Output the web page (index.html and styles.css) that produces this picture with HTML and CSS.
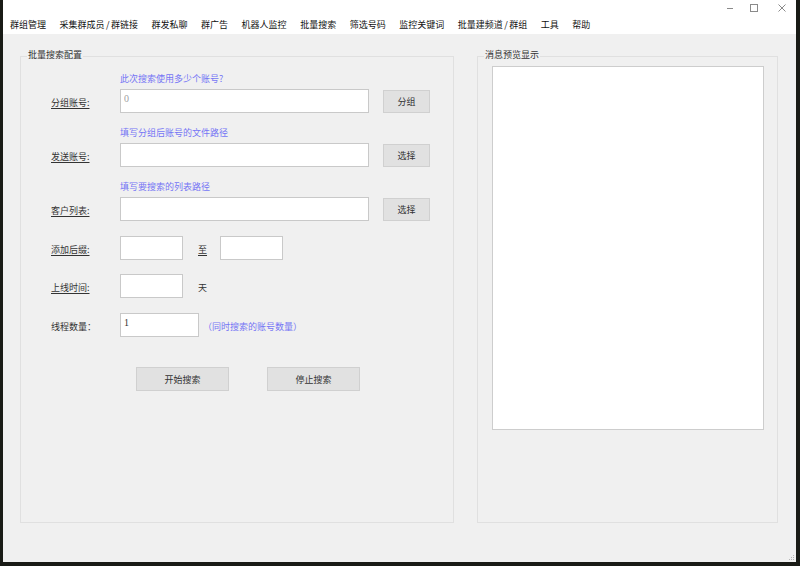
FILE: index.html
```html
<!DOCTYPE html>
<html lang="zh-CN">
<head>
  <meta charset="UTF-8">
  <title>批量搜索</title>
  <link rel="stylesheet" href="styles.css">
</head>
<body>

<div class="window">
  <div class="titlebar">
    <svg class="cap-btn" width="20" height="17" viewBox="0 0 20 17"><line x1="7" y1="8.5" x2="13" y2="8.5" stroke="#8a8a8a" stroke-width="1"/></svg>
    <svg class="cap-btn" width="28" height="17" viewBox="0 0 28 17"><rect x="10.5" y="4.5" width="7" height="7" fill="none" stroke="#8a8a8a" stroke-width="1"/></svg>
    <svg class="cap-btn" width="28" height="17" viewBox="0 0 28 17"><path d="M10.5 4.5 L17.5 11.5 M17.5 4.5 L10.5 11.5" stroke="#8a8a8a" stroke-width="1"/></svg>
  </div>

  <ul class="menubar">
    <li>群组管理</li>
    <li>采集群成员<span class="slash">/</span>群链接</li>
    <li>群发私聊</li>
    <li>群广告</li>
    <li>机器人监控</li>
    <li>批量搜索</li>
    <li>筛选号码</li>
    <li>监控关键词</li>
    <li>批量建频道<span class="slash">/</span>群组</li>
    <li>工具</li>
    <li>帮助</li>
  </ul>

  <div class="content">
    <div class="group group-config">
      <span class="group-title">批量搜索配置</span>

      <div class="field">
        <div class="hint">此次搜索使用多少个账号?</div>
        <div class="row">
          <label class="label u">分组账号:</label>
          <input class="text wide" type="text" placeholder="0">
          <button class="btn btn-small">分组</button>
        </div>
      </div>

      <div class="field field-next">
        <div class="hint">填写分组后账号的文件路径</div>
        <div class="row">
          <label class="label u">发送账号:</label>
          <input class="text wide" type="text">
          <button class="btn btn-small">选择</button>
        </div>
      </div>

      <div class="field field-next">
        <div class="hint">填写要搜索的列表路径</div>
        <div class="row">
          <label class="label u">客户列表:</label>
          <input class="text wide" type="text">
          <button class="btn btn-small">选择</button>
        </div>
      </div>

      <div class="row row-suffix">
        <label class="label u">添加后缀:</label>
        <input class="text short" type="text">
        <span class="sep u">至</span>
        <input class="text short" type="text">
      </div>

      <div class="row row-online">
        <label class="label u">上线时间:</label>
        <input class="text short" type="text">
        <span class="sep">天</span>
      </div>

      <div class="row row-thread">
        <label class="label">线程数量：</label>
        <input class="text mid" type="text" value="1">
        <span class="hint-inline">（同时搜索的账号数量）</span>
      </div>

      <div class="actions">
        <button class="btn btn-big">开始搜索</button>
        <button class="btn btn-big">停止搜索</button>
      </div>
    </div>

    <div class="group group-preview">
      <span class="group-title">消息预览显示</span>
      <textarea class="preview"></textarea>
    </div>
  </div>

  <svg class="grip" width="8" height="8" viewBox="0 0 8 8">
    <rect x="6" y="2" width="1" height="1" fill="#b5b5b5"/>
    <rect x="4" y="4" width="1" height="1" fill="#b5b5b5"/>
    <rect x="6" y="4" width="1" height="1" fill="#b5b5b5"/>
    <rect x="2" y="6" width="1" height="1" fill="#b5b5b5"/>
    <rect x="4" y="6" width="1" height="1" fill="#b5b5b5"/>
    <rect x="6" y="6" width="1" height="1" fill="#b5b5b5"/>
  </svg>
</div>

</body>
</html>
```

FILE: styles.css
```css
body {
  margin: 0;
  background-color: #191b16;
  font-family: "Noto Sans CJK SC", "Noto Sans", sans-serif;
  font-size: 9px;
  color: #333;
}
.window {
  position: relative;
  margin-left: 3px;
  width: 793px;
  height: 562px;
  background-color: #f0f0f0;
  display: flex;
  flex-direction: column;
}
.titlebar {
  height: 17px;
  background: white;
  display: flex;
  justify-content: flex-end;
}
.cap-btn {
  display: block;
}
.menubar {
  list-style: none;
  margin: 0;
  padding: 0 0 0 7px;
  height: 17px;
  background: white;
  display: flex;
  gap: 13.5px;
  line-height: 16px;
  color: #111;
}
.menubar .slash {
  padding: 0 1.5px;
}
.content {
  display: flex;
  gap: 23px;
  padding: 22px 0 0 17px;
}
.group {
  position: relative;
  box-sizing: border-box;
  height: 467px;
  border: 1px solid #e0e0e0;
}
.group-title {
  position: absolute;
  top: -8px;
  left: 6px;
  padding: 0 1px;
  line-height: 12px;
  background-color: #f0f0f0;
  color: #333;
}
.group-config {
  width: 434px;
  padding: 16px 0 0 30px;
}
.group-preview {
  width: 301px;
  padding: 9px 0 0 14px;
}
.preview {
  display: block;
  box-sizing: border-box;
  width: 272px;
  height: 364px;
  margin: 0;
  border: 1px solid #cdcdcd;
  background: white;
  resize: none;
}
.hint {
  padding-left: 69px;
  line-height: 12px;
  color: #7575f5;
}
.field-next {
  margin-top: 14px;
}
.row {
  display: flex;
  align-items: center;
  height: 24px;
}
.field .row {
  margin-top: 4px;
}
.row-suffix {
  margin-top: 15px;
}
.row-online {
  margin-top: 14px;
}
.row-thread {
  margin-top: 15px;
}
.label {
  width: 69px;
  padding-top: 3px;
  flex-shrink: 0;
}
.u {
  text-decoration: underline;
  text-underline-offset: 2px;
}
.text {
  box-sizing: border-box;
  height: 24px;
  margin: 0;
  padding: 0 3px 6px;
  border: 1px solid #c9c9c9;
  background: white;
  font-family: "Liberation Serif", serif;
  font-size: 10px;
  color: #333;
  outline: none;
}
.text::placeholder {
  color: #a0a0a0;
}
.wide {
  width: 249px;
}
.short {
  width: 63px;
}
.mid {
  width: 79px;
}
.sep {
  width: 9px;
  margin: 3px 13px 0 15px;
}
.hint-inline {
  margin: 2px 0 0 4px;
  color: #7575f5;
}
.btn {
  box-sizing: border-box;
  margin: 0;
  border: 1px solid #d0d0d0;
  background-color: #e1e1e1;
  font-family: inherit;
  font-size: 9px;
  color: #333;
  cursor: pointer;
}
.btn-small {
  width: 47px;
  height: 23px;
  margin-left: 14px;
}
.actions {
  display: flex;
  gap: 38px;
  margin: 30px 0 0 85px;
}
.btn-big {
  width: 93px;
  height: 24px;
}
.grip {
  position: absolute;
  right: 1px;
  bottom: 1px;
}
```
